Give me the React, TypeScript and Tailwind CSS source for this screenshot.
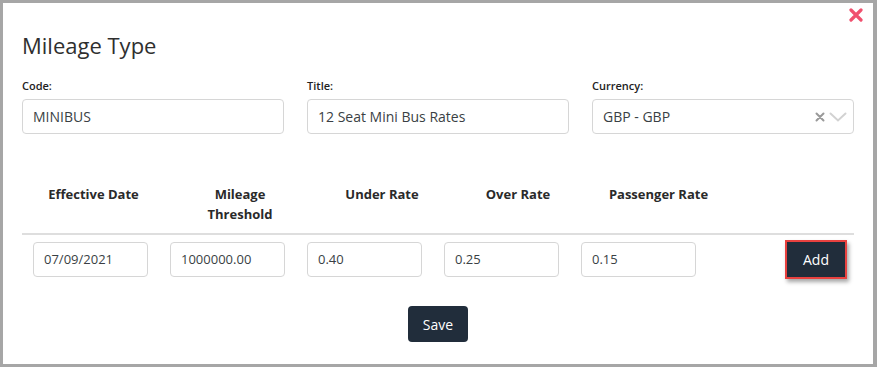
import React from "react";

const font = "font-['Open_Sans','Noto_Sans',sans-serif]";

function Field({ label, value, select }: { label: string; value: string; select?: boolean }) {
  return (
    <div className="flex flex-col w-[262px]">
      <label className="text-[11px] leading-[16px] font-semibold text-[#222]">{label}</label>
      <div className="mt-[5px] h-[35px] rounded-[4px] border border-[#d6d6d6] flex items-center pl-[10px] pr-[6px] text-[14px] text-[#3a3f44]">
        <span className="flex-1">{value}</span>
        {select && (
          <div className="flex items-center gap-[4px]">
            <svg width="10" height="10" viewBox="0 0 10 10">
              <path d="M1.5 1.5 L8.5 8.5 M8.5 1.5 L1.5 8.5" stroke="#9a9a9a" strokeWidth="2" strokeLinecap="round" />
            </svg>
            <svg width="18" height="10" viewBox="0 0 18 10">
              <path d="M1.5 1.5 L9 8.5 L16.5 1.5" stroke="#d2d2d2" strokeWidth="2" fill="none" strokeLinecap="round" />
            </svg>
          </div>
        )}
      </div>
    </div>
  );
}

function RowInput({ value }: { value: string }) {
  return (
    <div className="w-[115px] h-[35px] rounded-[4px] border border-[#d6d6d6] flex items-center pl-[10px] text-[13px] text-[#3a3f44]">
      {value}
    </div>
  );
}

export default function App() {
  return (
    <div className={`w-[877px] h-[367px] border-[3px] border-r-[4px] border-[#a6a6a6] bg-white relative ${font}`}>
      <div className="absolute top-[5px] right-[10px]">
        <svg width="14" height="14" viewBox="0 0 14 14">
          <path d="M2 2 L12 12 M12 2 L2 12" stroke="#f0506e" strokeWidth="3.2" strokeLinecap="round" />
        </svg>
      </div>
      <div className="pl-[19px] pr-[19px]">
        <h1 className="mt-[27px] text-[22px] leading-[30px] text-[#2f2f2f]">Mileage Type</h1>
        <div className="mt-[18px] flex gap-[23px]">
          <Field label="Code:" value="MINIBUS" />
          <Field label="Title:" value="12 Seat Mini Bus Rates" />
          <Field label="Currency:" value="GBP - GBP" select />
        </div>
        <div className="mt-[50px] border-b-2 border-[#dedede] pb-[9px] flex text-[13px] leading-[20px] font-bold text-[#2a2a2a]">
          <div className="w-[143px] text-center">Effective Date</div>
          <div className="w-[150px] text-center">Mileage<br />Threshold</div>
          <div className="w-[134px] text-center">Under Rate</div>
          <div className="w-[138px] text-center">Over Rate</div>
          <div className="w-[143px] text-center">Passenger Rate</div>
        </div>
        <div className="mt-[5px] flex items-center pl-[11px] gap-[22px]">
          <RowInput value="07/09/2021" />
          <RowInput value="1000000.00" />
          <RowInput value="0.40" />
          <RowInput value="0.25" />
          <RowInput value="0.15" />
          <button className="ml-auto mr-[7px] w-[62px] h-[39px] border-2 border-[#e8413f] bg-[#212d3b] text-white text-[14px] shadow-[2px_3px_4px_rgba(0,0,0,0.35)]">
            Add
          </button>
        </div>
        <div className="mt-[27px] flex justify-center">
          <button className="w-[60px] h-[36px] rounded-[4px] bg-[#212d3b] text-white text-[14px]">Save</button>
        </div>
      </div>
    </div>
  );
}
